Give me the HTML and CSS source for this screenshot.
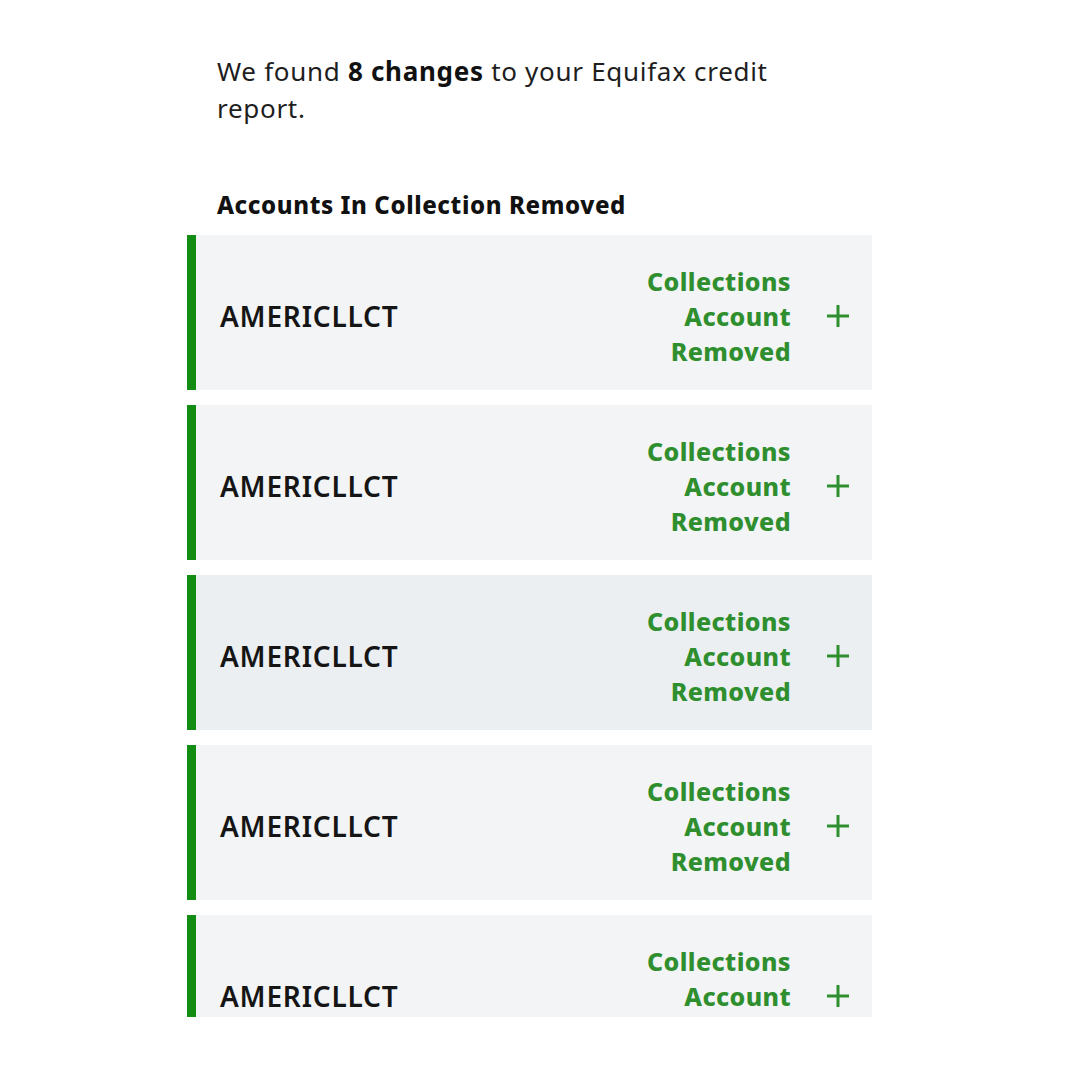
FILE: index.html
```html
<!DOCTYPE html>
<html lang="en">
<head>
<meta charset="utf-8">
<title>Equifax changes</title>
<link rel="stylesheet" href="styles.css">
</head>
<body>
<main class="page">
  <p class="intro">We found <strong>8 changes</strong> to your Equifax credit report.</p>
  <h2 class="section-title">Accounts In Collection Removed</h2>
  <div class="list">
    <div class="card">
      <span class="name">AMERICLLCT</span>
      <span class="status">Collections<br>Account<br>Removed</span>
      <svg class="plus" viewBox="0 0 24 24"><path d="M12 1V23M1 12H23"/></svg>
    </div>
    <div class="card">
      <span class="name">AMERICLLCT</span>
      <span class="status">Collections<br>Account<br>Removed</span>
      <svg class="plus" viewBox="0 0 24 24"><path d="M12 1V23M1 12H23"/></svg>
    </div>
    <div class="card card-hover">
      <span class="name">AMERICLLCT</span>
      <span class="status">Collections<br>Account<br>Removed</span>
      <svg class="plus" viewBox="0 0 24 24"><path d="M12 1V23M1 12H23"/></svg>
    </div>
    <div class="card">
      <span class="name">AMERICLLCT</span>
      <span class="status">Collections<br>Account<br>Removed</span>
      <svg class="plus" viewBox="0 0 24 24"><path d="M12 1V23M1 12H23"/></svg>
    </div>
    <div class="card">
      <span class="name">AMERICLLCT</span>
      <span class="status">Collections<br>Account<br>Removed</span>
      <svg class="plus" viewBox="0 0 24 24"><path d="M12 1V23M1 12H23"/></svg>
    </div>
  </div>
</main>
</body>
</html>
```
FILE: styles.css
```css
* { box-sizing: border-box; }
html, body { margin: 0; padding: 0; background: #ffffff; }
body {
  font-family: "Noto Sans", "Open Sans", sans-serif;
  color: #1c1c1c;
}
.page {
  width: 685px;
  margin-left: 187px;
  padding-top: 53px;
  height: 1017px;
  overflow: hidden;
}
.intro {
  margin: 0;
  padding-left: 30px;
  padding-right: 75px;
  font-size: 26px;
  line-height: 37px;
  letter-spacing: 0.7px;
  color: #1e1e1e;
}
.intro strong { font-weight: 700; color: #111; }
.section-title {
  margin: 63px 0 0;
  padding-left: 30px;
  font-size: 24px;
  line-height: 30px;
  letter-spacing: 0.6px;
  font-weight: 800;
  color: #111;
}
.list {
  margin-top: 15px;
  display: flex;
  flex-direction: column;
  gap: 15px;
}
.card {
  flex: 0 0 155px;
  height: 155px;
  display: flex;
  align-items: center;
  background: #f3f4f6;
  border-left: 9px solid #138c13;
  padding: 7px 22px 0 24px;
}
.card-hover { background: #ebeff2; }
.name {
  flex: 1;
  font-size: 28px;
  font-weight: 600;
  letter-spacing: 0.8px;
  color: #151515;
}
.status {
  text-align: right;
  font-size: 25px;
  line-height: 35px;
  font-weight: 800;
  letter-spacing: 0.4px;
  color: #2f8f2f;
}
.plus {
  width: 24px;
  height: 24px;
  margin-left: 35px;
  stroke: #2f8f2f;
  stroke-width: 3;
  fill: none;
}
```
